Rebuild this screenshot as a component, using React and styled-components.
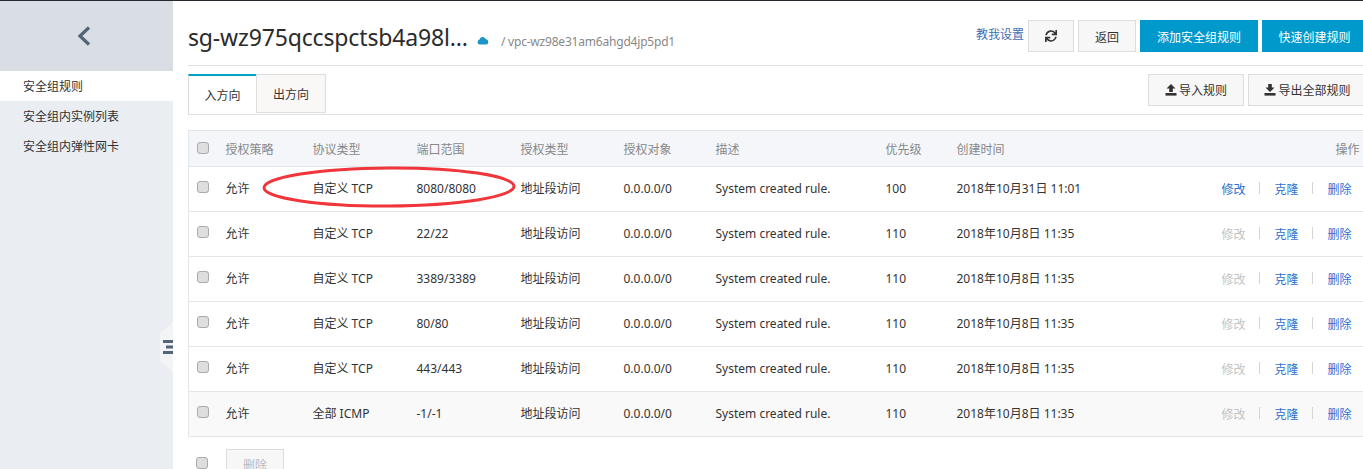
import React from 'react';
import styled, { createGlobalStyle } from 'styled-components';
import { FaSync } from 'react-icons/fa';

const GlobalStyle = createGlobalStyle`
  html, body {
    margin: 0;
    height: 469px;
    overflow: hidden;
    background: #fff;
  }
  body {
    font-family: 'Noto Sans', 'Noto Sans CJK SC', sans-serif;
    font-size: 12px;
    color: #333;
  }
  * { box-sizing: border-box; }
`;

const Page = styled.div`
  display: flex;
  width: 1367px;
  height: 469px;
  border-top: 1px solid #262a30;
`;

const Sidebar = styled.aside`
  position: relative;
  flex: 0 0 173px;
  background: #eaedf1;
`;

const BackBar = styled.div`
  display: flex;
  align-items: center;
  justify-content: center;
  height: 70px;
  padding: 0 6px 1px 0;
  background: #d9dee4;
  color: #546478;
`;

const NavItem = styled.div`
  height: 30px;
  padding-left: 23px;
  line-height: 32px;
  font-size: 12px;
  color: #333;
  background: ${(p) => (p.$active ? '#fff' : 'transparent')};
`;

const Collapse = styled.div`
  position: absolute;
  top: 321px;
  right: 0;
  display: flex;
  align-items: center;
  justify-content: flex-end;
  width: 13px;
  height: 50px;
  background: #f3f4f6;
  clip-path: polygon(100% 0, 100% 100%, 0 78%, 0 22%);
  color: #546478;
`;

const Main = styled.main`
  position: relative;
  flex: 1;
  min-width: 0;
  padding-left: 15px;
`;

const TitleBar = styled.header`
  display: flex;
  align-items: flex-start;
  justify-content: space-between;
  height: 65px;
  border-bottom: 1px solid #e1e1e1;
`;

const TitleGroup = styled.div`
  display: flex;
  align-items: center;
  height: 64px;
  padding-top: 8px;
`;

const Title = styled.h1`
  margin: 0;
  font-size: 23px;
  font-weight: 400;
  letter-spacing: -0.15px;
  color: #2b2b2b;
  line-height: 32px;
`;

const CloudIcon = styled.svg`
  width: 12px;
  height: 9px;
  margin: 6px 0 0 9px;
  color: #1e94c9;
`;

const VpcPath = styled.span`
  margin: 8px 0 0 12px;
  font-size: 12px;
  letter-spacing: -0.2px;
  color: #888;
`;

const Actions = styled.div`
  display: flex;
  align-items: center;
  gap: 4px;
  margin-top: 19px;
`;

const HelpLink = styled.a`
  margin-top: -5px;
  font-size: 12px;
  color: #3f6db5;
`;

const Button = styled.button`
  display: inline-flex;
  align-items: center;
  justify-content: center;
  gap: 2px;
  width: ${(p) => p.$w}px;
  height: 32px;
  padding: 0;
  font: inherit;
  font-size: 12px;
  color: ${(p) => (p.$primary ? '#fff' : '#333')};
  background: ${(p) => (p.$primary ? '#0099cc' : '#f7f7f7')};
  border: 1px solid ${(p) => (p.$primary ? '#0099cc' : '#ddd')};
`;

const ActionButton = styled(Button)`
  padding-top: 2px;
`;

const TabBar = styled.div`
  display: flex;
  align-items: flex-start;
  justify-content: space-between;
  height: 49px;
  padding-top: 8px;
  border-bottom: 1px solid #e1e1e1;
`;

const Tabs = styled.div`
  display: flex;
`;

const Tab = styled.div`
  width: ${(p) => p.$w}px;
  height: ${(p) => (p.$active ? 40 : 39)}px;
  text-align: center;
  line-height: 39px;
  font-size: 12px;
  background: ${(p) => (p.$active ? '#fff' : '#f9f8f7')};
  border: 1px solid #ddd;
  border-right-width: ${(p) => (p.$active ? 0 : 1)}px;
  border-top: ${(p) => (p.$active ? '2px solid #00a2ca' : '1px solid #ddd')};
  border-bottom: ${(p) => (p.$active ? '0' : '1px solid #ddd')};
  color: #333;
`;

const ToolGroup = styled.div`
  display: flex;
  gap: 4px;
`;

const Table = styled.table`
  width: 100%;
  margin-top: 15px;
  border-collapse: collapse;
  table-layout: fixed;
  border-left: 1px solid #e1e6eb;
`;

const HeadRow = styled.tr`
  height: 36px;
  background: #f4f6fa;
  border-top: 1px solid #e1e6eb;
  border-bottom: 1px solid #e1e6eb;
`;

const HeadCell = styled.th`
  padding: 0;
  font-size: 12px;
  font-weight: 400;
  text-align: ${(p) => p.$align || 'left'};
  color: #888;
  padding-right: ${(p) => (p.$align ? 8 : 0)}px;
`;

const Row = styled.tr`
  height: 45px;
  background: ${(p) => (p.$muted ? '#f9f9f9' : '#fff')};
  border-bottom: 1px solid #e1e6eb;
`;

const Cell = styled.td`
  padding: 0;
  font-size: 12px;
  color: #333;
  white-space: nowrap;
  padding-bottom: 2px;
`;

const Check = styled.span`
  display: block;
  width: 12px;
  height: 12px;
  margin-left: 8px;
  margin-top: -2px;
  background: #dedede;
  border: 1px solid #ababab;
  border-radius: 3px;
`;

const Ops = styled.div`
  display: flex;
  align-items: center;
  justify-content: flex-end;
  padding: 2px 16px 0 0;
`;

const OpLink = styled.a`
  color: ${(p) => (p.$disabled ? '#c4c4c4' : '#2f6fd0')};
`;

const OpDivider = styled.i`
  width: 1px;
  height: 12px;
  margin: -3px 14px 0;
  background: #d5d5d5;
`;

const Footer = styled.div`
  display: flex;
  align-items: flex-start;
  height: 40px;
  padding-top: 12px;
`;

const FootCheck = styled(Check)`
  margin-top: 8px;
`;

const DeleteButton = styled.button`
  width: 58px;
  height: 32px;
  margin-left: 18px;
  padding: 0;
  font: inherit;
  font-size: 12px;
  color: #bbb;
  background: #f7f7f7;
  border: 1px solid #ddd;
`;

const Ellipse = styled.svg`
  position: absolute;
  top: 170px;
  left: 89px;
  width: 256px;
  height: 34px;
  overflow: visible;
  pointer-events: none;
`;

const Upload = () => (
  <svg width="12" height="12" viewBox="0 0 12 12" fill="currentColor">
    <path d="M6 0 L10.5 4.5 H7.8 V8 H4.2 V4.5 H1.5 Z" />
    <rect x="0.5" y="9" width="11" height="2.6" />
  </svg>
);

const Download = () => (
  <svg width="12" height="12" viewBox="0 0 12 12" fill="currentColor">
    <path d="M4.2 0 H7.8 V3.6 H10.5 L6 8 L1.5 3.6 H4.2 Z" />
    <rect x="0.5" y="9" width="11" height="2.6" />
  </svg>
);

const rows = [
  ['自定义 TCP', '8080/8080', '100', '2018年10月31日 11:01', false],
  ['自定义 TCP', '22/22', '110', '2018年10月8日 11:35', true],
  ['自定义 TCP', '3389/3389', '110', '2018年10月8日 11:35', true],
  ['自定义 TCP', '80/80', '110', '2018年10月8日 11:35', true],
  ['自定义 TCP', '443/443', '110', '2018年10月8日 11:35', true],
  ['全部 ICMP', '-1/-1', '110', '2018年10月8日 11:35', true],
];

const columns = [37, 87, 104, 104, 103, 92, 170, 71, 180, 231];
const heads = ['授权策略', '协议类型', '端口范围', '授权类型', '授权对象', '描述', '优先级', '创建时间'];

export default function App() {
  return (
    <Page>
      <GlobalStyle />
      <Sidebar>
        <BackBar>
          <svg width="14" height="20" viewBox="0 0 14 20" fill="none" stroke="currentColor" strokeWidth="3.2">
            <path d="M12 1.5 L3 10 L12 18.5" />
          </svg>
        </BackBar>
        <NavItem $active>安全组规则</NavItem>
        <NavItem>安全组内实例列表</NavItem>
        <NavItem>安全组内弹性网卡</NavItem>
        <Collapse>
          <svg width="10" height="14" viewBox="0 0 10 14" fill="currentColor">
            <rect x="0" y="0" width="10" height="3" />
            <rect x="3" y="5.5" width="7" height="3" />
            <rect x="0" y="11" width="10" height="3" />
          </svg>
        </Collapse>
      </Sidebar>
      <Main>
        <TitleBar>
          <TitleGroup>
            <Title>sg-wz975qccspctsb4a98l...</Title>
            <CloudIcon viewBox="0 0 13 10" fill="currentColor">
              <path d="M3 9.5 A2.8 2.8 0 0 1 2.6 4 A3.6 3.6 0 0 1 9.4 3.2 A3.2 3.2 0 0 1 10 9.5 Z" />
            </CloudIcon>
            <VpcPath>/ vpc-wz98e31am6ahgd4jp5pd1</VpcPath>
          </TitleGroup>
          <Actions>
            <HelpLink>教我设置</HelpLink>
            <Button $w={46}><FaSync size={12} /></Button>
            <ActionButton $w={58}>返回</ActionButton>
            <ActionButton $w={118} $primary>添加安全组规则</ActionButton>
            <ActionButton $w={105} $primary>快速创建规则</ActionButton>
          </Actions>
        </TitleBar>
        <TabBar>
          <Tabs>
            <Tab $w={68} $active>入方向</Tab>
            <Tab $w={70}>出方向</Tab>
          </Tabs>
          <ToolGroup>
            <Button $w={96}><Upload />导入规则</Button>
            <Button $w={119}><Download />导出全部规则</Button>
          </ToolGroup>
        </TabBar>
        <Table>
          <colgroup>
            {columns.map((w, i) => <col key={i} style={{ width: w }} />)}
          </colgroup>
          <thead>
            <HeadRow>
              <HeadCell><Check /></HeadCell>
              {heads.map((h) => <HeadCell key={h}>{h}</HeadCell>)}
              <HeadCell $align="right">操作</HeadCell>
            </HeadRow>
          </thead>
          <tbody>
            {rows.map(([proto, port, priority, created, locked], i) => (
              <Row key={port} $muted={i === rows.length - 1}>
                <Cell><Check /></Cell>
                <Cell>允许</Cell>
                <Cell>{proto}</Cell>
                <Cell>{port}</Cell>
                <Cell>地址段访问</Cell>
                <Cell>0.0.0.0/0</Cell>
                <Cell>System created rule.</Cell>
                <Cell>{priority}</Cell>
                <Cell>{created}</Cell>
                <Cell>
                  <Ops>
                    <OpLink $disabled={locked}>修改</OpLink>
                    <OpDivider />
                    <OpLink>克隆</OpLink>
                    <OpDivider />
                    <OpLink>删除</OpLink>
                  </Ops>
                </Cell>
              </Row>
            ))}
          </tbody>
        </Table>
        <Footer>
          <FootCheck />
          <DeleteButton disabled>删除</DeleteButton>
        </Footer>
        <Ellipse viewBox="0 0 256 34" fill="none">
          <ellipse cx="127" cy="16" rx="125" ry="19" stroke="#f0353b" strokeWidth="3" transform="rotate(-0.3 127 16)" />
        </Ellipse>
      </Main>
    </Page>
  );
}
